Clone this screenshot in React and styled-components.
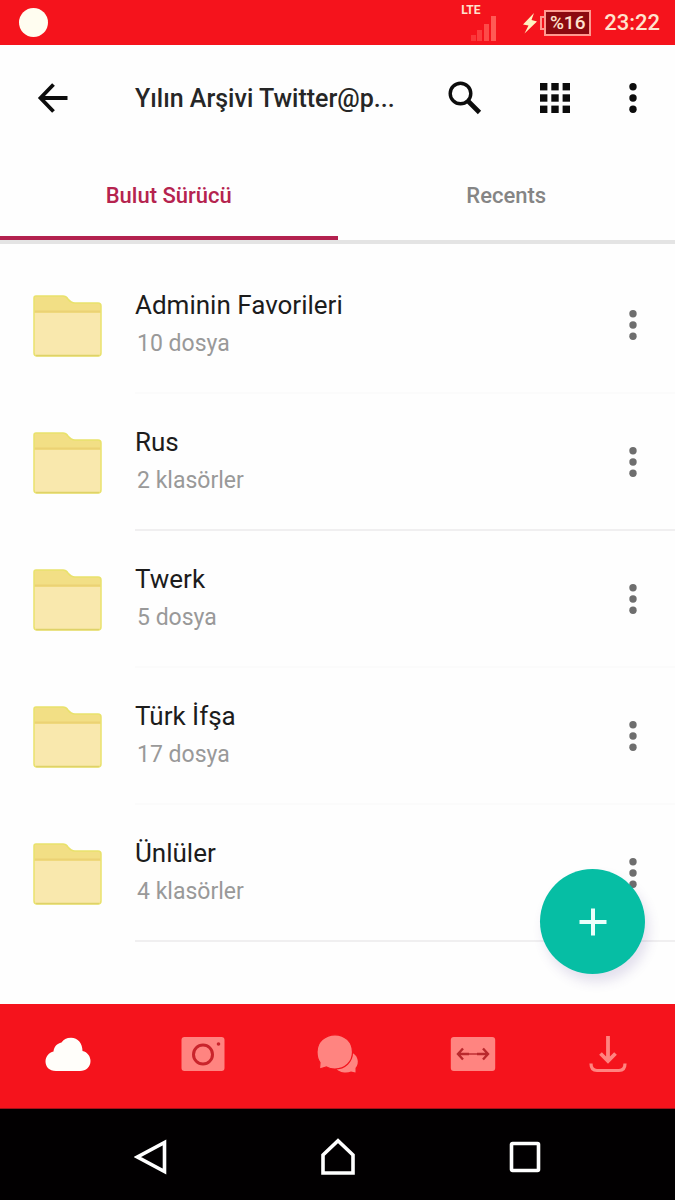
import React, { useState } from 'react'
import styled, { createGlobalStyle } from 'styled-components'

const GlobalStyle = createGlobalStyle`
  * {
    box-sizing: border-box;
  }
  body {
    margin: 0;
    background-color: #fefefe;
    font-family: Roboto, 'Noto Sans', sans-serif;
  }
  button {
    padding: 0;
    border: none;
    background: none;
    font-family: inherit;
    cursor: pointer;
  }
  svg {
    display: block;
    flex: none;
  }
`;

const Screen = styled.div`
  display: flex;
  flex-direction: column;
  min-height: 100vh;
`;

const StatusBar = styled.div`
  display: flex;
  align-items: center;
  height: 45px;
  padding: 0 15px 0 19px;
  background-color: #f5131c;
  color: #ffe3cd;
`;

const RecordDot = styled.span`
  width: 29px;
  height: 29px;
  margin-right: auto;
  border-radius: 50%;
  background-color: #fffdf0;
`;

const Signal = styled.div`
  display: flex;
  flex-direction: column;
  align-items: flex-end;
  width: 36px;
  margin-right: 25px;
`;

const Network = styled.span`
  align-self: flex-start;
  font-size: 12px;
  line-height: 10px;
  font-weight: 700;
`;

const Battery = styled.div`
  display: flex;
  align-items: center;
  margin: 0 13px 0 2px;
`;

const BatteryCap = styled.span`
  width: 4px;
  height: 14px;
  border: 2px solid #ff9a90;
  border-right: none;
`;

const BatteryLevel = styled.span`
  width: 47px;
  height: 26px;
  border: 2px solid #ff9a90;
  background-color: #8c0a10;
  font-size: 19px;
  line-height: 22px;
  font-weight: 500;
  text-align: center;
`;

const Clock = styled.time`
  font-size: 22px;
  font-weight: 500;
`;

const Header = styled.header`
  display: flex;
  align-items: center;
  height: 106px;
  padding: 0 30px 0 29px;
`;

const IconButton = styled.button`
  display: flex;
  flex: none;
  align-items: center;
  justify-content: center;
  width: ${props => props.$narrow ? '24px' : '48px'};
  height: 48px;
  color: ${props => props.$muted ? '#6e6e6e' : '#0c0c0c'};
`;

const Title = styled.h1`
  flex: 1;
  margin: 0 0 0 58px;
  color: #262626;
  font-size: 25px;
  font-weight: 500;
  white-space: nowrap;
`;

const Actions = styled.div`
  display: flex;
  gap: 42px;
`;

const Tabs = styled.div`
  display: flex;
  border-bottom: 4px solid #e4e4e4;
`;

const Tab = styled.button`
  flex: 1;
  height: 89px;
  padding-top: 4px;
  border-bottom: 4px solid ${props => props.$active ? '#b3214f' : 'transparent'};
  color: ${props => props.$active ? '#b5234f' : '#858585'};
  font-size: 22px;
  font-weight: 500;
`;

const Main = styled.main`
  position: relative;
  flex: 1;
  padding: 13px 0 60px;
`;

const FolderList = styled.ul`
  margin: 0;
  padding: 0;
  list-style-type: none;
`;

const FolderItem = styled.li`
  display: flex;
  align-items: center;
  padding-left: 32px;
`;

const FolderBody = styled.div`
  display: flex;
  flex: 1;
  align-items: center;
  justify-content: space-between;
  height: 137px;
  margin-left: 33px;
  padding-right: 30px;
  border-bottom: 2px solid ${props => props.$faint ? '#fbfbfb' : '#f0eff0'};
`;

const FolderName = styled.div`
  color: #1c1c1c;
  font-size: 26px;
  line-height: 38px;
`;

const FolderCount = styled.div`
  padding-left: 2px;
  color: #999999;
  font-size: 23px;
  line-height: 40px;
`;

const AddButton = styled.button`
  position: absolute;
  right: 30px;
  bottom: 30px;
  display: flex;
  align-items: center;
  justify-content: center;
  width: 105px;
  height: 105px;
  border-radius: 50%;
  background-color: #06bea4;
  box-shadow: 4px 8px 12px rgba(90, 70, 150, 0.16);
`;

const BottomNav = styled.nav`
  display: flex;
  height: 105px;
  border-bottom: 1px solid #a01018;
  background-color: #f5131c;
`;

const NavButton = styled.button`
  display: flex;
  flex: 1;
  align-items: center;
  justify-content: center;
  padding-bottom: 4px;
  color: ${props => props.$active ? '#fffefa' : '#ff8480'};
`;

const SystemBar = styled.nav`
  display: flex;
  height: 91px;
  padding: 0 57px;
  background-color: #020001;
  color: #ffffff;
`;

const SystemButton = styled.button`
  display: flex;
  flex: 1;
  align-items: center;
  justify-content: center;
  padding-top: 4px;
  color: inherit;
`;

const BarsIcon = () => (
  <svg width="26" height="26" viewBox="0 0 26 26" fill="#ff5a55">
    <rect x="0" y="20" width="5" height="6" opacity="0.5" />
    <rect x="6" y="15" width="5" height="11" opacity="0.6" />
    <rect x="13" y="9" width="5" height="17" opacity="0.8" />
    <rect x="20" y="1" width="5" height="25" />
  </svg>
)

const BoltIcon = () => (
  <svg width="16" height="22" viewBox="0 0 16 22" fill="#fff3c0">
    <path d="M12 1 L1 12.5 L6.5 13.5 L2.5 21.5 L15 9.5 L9.5 8 Z" />
  </svg>
)

const BackIcon = () => (
  <svg width="32" height="32" viewBox="0 0 32 32" fill="none" stroke="currentColor" strokeWidth="3.8">
    <path d="M30.5 16 H3 M16.5 2.5 L3.5 16 L16.5 29.5" />
  </svg>
)

const SearchIcon = () => (
  <svg width="34" height="34" viewBox="0 0 34 34" fill="none" stroke="currentColor">
    <circle cx="12.5" cy="12.5" r="10.3" strokeWidth="3.4" />
    <path d="M20 20 L31.5 31.5" strokeWidth="4.6" />
  </svg>
)

const GridIcon = () => (
  <svg width="30" height="30" viewBox="0 0 30 30" fill="currentColor">
    {[0, 11.3, 22.6].map(y => [0, 11.3, 22.6].map(x => (
      <rect key={`${x}-${y}`} x={x} y={y} width="7.4" height="7.4" />
    )))}
  </svg>
)

const DotsIcon = () => (
  <svg width="8" height="32" viewBox="0 0 8 32" fill="currentColor">
    <circle cx="4" cy="4.8" r="3.7" />
    <circle cx="4" cy="16" r="3.7" />
    <circle cx="4" cy="27.2" r="3.7" />
  </svg>
)

const FolderIcon = () => (
  <svg width="70" height="64" viewBox="0 0 70 64">
    <path d="M2 4 Q2 2 4 2 H31 Q34 2 36 5 Q39 9 43 9 H66 Q69 9 69 12 V59 Q69 62 66 62 H5 Q2 62 2 59 Z" fill="#f2df85" stroke="#e9e26c" strokeWidth="1.5" />
    <path d="M2.8 19 H68.2 V59 Q68 61.2 66 61.2 H5 Q3 61.2 2.8 59 Z" fill="#f9e8ad" />
    <path d="M2.8 17.5 H68.2" stroke="#ebd274" strokeWidth="2" />
    <path d="M4 61.6 H67" stroke="#dfd268" strokeWidth="1.5" />
  </svg>
)

const PlusIcon = () => (
  <svg width="28" height="28" viewBox="0 0 28 28" stroke="#ecfffb" strokeWidth="4">
    <path d="M14 0.5 V27.5 M0.5 14 H27.5" />
  </svg>
)

const CloudIcon = () => (
  <svg width="46" height="34" viewBox="0 0 46 34" fill="currentColor">
    <path d="M11 34 C4 34 0.5 29.5 0.5 24.5 C0.5 19.5 4 15.5 8.5 14.5 C9 9.5 12 6.5 16.5 5.5 C18.5 2.5 21.5 0.8 26 0.8 C33 0.8 37.5 6.5 37.5 14 C42.5 15 45.5 19.5 45.5 24 C45.5 30 41 34 35 34 Z" />
  </svg>
)

const CameraIcon = () => (
  <svg width="44" height="34" viewBox="0 0 44 34">
    <rect x="0.5" width="43" height="34" rx="3" fill="currentColor" />
    <circle cx="22" cy="17.5" r="9.5" fill="none" stroke="#c9242b" strokeWidth="3" />
    <circle cx="37.5" cy="7" r="1.8" fill="#c9242b" />
  </svg>
)

const ChatIcon = () => (
  <svg width="44" height="40" viewBox="0 0 44 40" fill="currentColor">
    <path d="M34 18 C42 20 44 29 39.5 34 V38.5 L35 37.5 C30 40 22 38 20 34 Z" />
    <path d="M19 0.8 C29 0.8 36.5 8 36.5 18 C36.5 28 29 35 19 35 C15.5 35 13 34.5 10.5 33 L3.5 35 L4 28.5 C1.8 25.5 1 22 1 18 C1 8 9 0.8 19 0.8 Z" stroke="#f5131c" strokeWidth="1.2" />
  </svg>
)

const TransferIcon = () => (
  <svg width="46" height="34" viewBox="0 0 46 34">
    <rect x="0.8" width="44.4" height="34" rx="3" fill="currentColor" />
    <path d="M8.5 17 H19 M27 17 H37.5 M13 11.5 L8 17 L13 22.5 M33 11.5 L38 17 L33 22.5" fill="none" stroke="#b9292d" strokeWidth="2.4" />
    <path d="M19 17 H27" stroke="#b9292d" strokeWidth="1.4" />
  </svg>
)

const DownloadIcon = () => (
  <svg width="38" height="38" viewBox="0 0 38 38" fill="none" stroke="currentColor" strokeWidth="3.8">
    <path d="M19 1 V26 M11.5 18.5 L19 26 L26.5 18.5" />
    <path d="M2 28.5 C2 33.5 4 35.5 8 35.5 H30 C34 35.5 36 33.5 36 28.5" strokeWidth="3.2" />
  </svg>
)

const SystemBackIcon = () => (
  <svg width="34" height="38" viewBox="0 0 34 38" fill="none" stroke="currentColor" strokeWidth="3.6">
    <path d="M30.5 4.5 V33.5 L3.5 19 Z" />
  </svg>
)

const HomeIcon = () => (
  <svg width="38" height="38" viewBox="0 0 38 38" fill="none" stroke="currentColor" strokeWidth="3.6">
    <path d="M4 35 V17 L19 2.8 L34 17 V35 Z" />
  </svg>
)

const RecentAppsIcon = () => (
  <svg width="32" height="32" viewBox="0 0 32 32" fill="none" stroke="currentColor" strokeWidth="3.6">
    <rect x="2.5" y="2.5" width="27" height="27" rx="1" />
  </svg>
)

const tabs = ['Bulut Sürücü', 'Recents']

const folders = [
  { name: 'Adminin Favorileri', count: '10 dosya', faint: true },
  { name: 'Rus', count: '2 klasörler' },
  { name: 'Twerk', count: '5 dosya', faint: true },
  { name: 'Türk İfşa', count: '17 dosya', faint: true },
  { name: 'Ünlüler', count: '4 klasörler' },
]

const navItems = [
  { label: 'Bulut', Icon: CloudIcon },
  { label: 'Kamera', Icon: CameraIcon },
  { label: 'Sohbet', Icon: ChatIcon },
  { label: 'Aktarım', Icon: TransferIcon },
  { label: 'İndirilenler', Icon: DownloadIcon },
]

const App = () => {

  const [activeTab, setActiveTab] = useState(tabs[0])
  const [activeNav, setActiveNav] = useState(navItems[0].label)

  return (
    <>
      <GlobalStyle />
      <Screen>
        <StatusBar>
          <RecordDot />
          <Signal>
            <Network>LTE</Network>
            <BarsIcon />
          </Signal>
          <BoltIcon />
          <Battery>
            <BatteryCap />
            <BatteryLevel>%16</BatteryLevel>
          </Battery>
          <Clock>23:22</Clock>
        </StatusBar>
        <Header>
          <IconButton aria-label="Geri"><BackIcon /></IconButton>
          <Title>Yılın Arşivi Twitter@p...</Title>
          <Actions>
            <IconButton aria-label="Ara"><SearchIcon /></IconButton>
            <IconButton aria-label="Izgara görünümü"><GridIcon /></IconButton>
            <IconButton $narrow aria-label="Menü"><DotsIcon /></IconButton>
          </Actions>
        </Header>
        <Tabs role="tablist">
          {tabs.map(tab => (
            <Tab
              key={tab}
              role="tab"
              aria-selected={tab === activeTab}
              $active={tab === activeTab}
              onClick={() => setActiveTab(tab)}
            >
              {tab}
            </Tab>
          ))}
        </Tabs>
        <Main>
          <FolderList>
            {folders.map(folder => (
              <FolderItem key={folder.name}>
                <FolderIcon />
                <FolderBody $faint={folder.faint}>
                  <div>
                    <FolderName>{folder.name}</FolderName>
                    <FolderCount>{folder.count}</FolderCount>
                  </div>
                  <IconButton $narrow $muted aria-label={`${folder.name} menüsü`}><DotsIcon /></IconButton>
                </FolderBody>
              </FolderItem>
            ))}
          </FolderList>
          <AddButton aria-label="Ekle"><PlusIcon /></AddButton>
        </Main>
        <BottomNav>
          {navItems.map(({ label, Icon }) => (
            <NavButton
              key={label}
              aria-label={label}
              $active={label === activeNav}
              onClick={() => setActiveNav(label)}
            >
              <Icon />
            </NavButton>
          ))}
        </BottomNav>
        <SystemBar>
          <SystemButton aria-label="Geri"><SystemBackIcon /></SystemButton>
          <SystemButton aria-label="Ana ekran"><HomeIcon /></SystemButton>
          <SystemButton aria-label="Son uygulamalar"><RecentAppsIcon /></SystemButton>
        </SystemBar>
      </Screen>
    </>
  )
}

export default App
